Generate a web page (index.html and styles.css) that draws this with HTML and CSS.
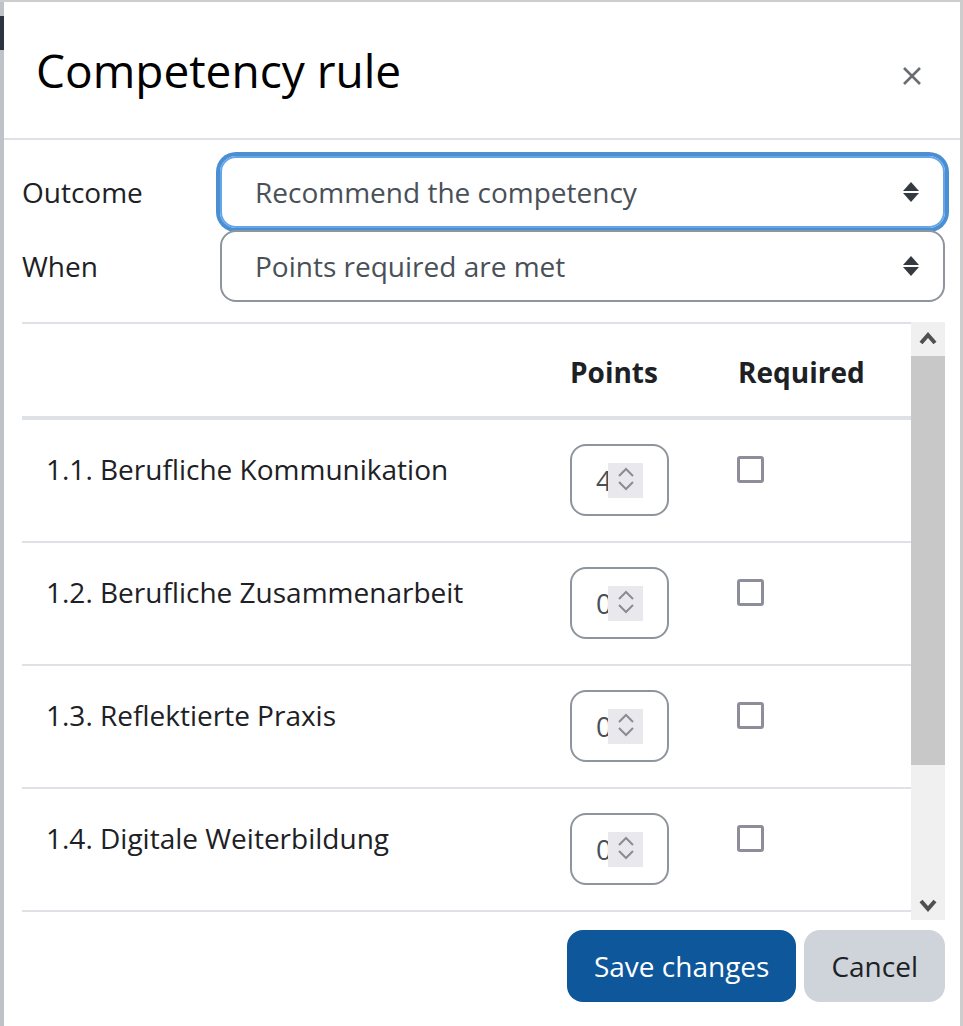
FILE: index.html
```html
<!DOCTYPE html>
<html lang="en">
<head>
    <meta charset="UTF-8">
    <meta name="viewport" content="width=device-width, initial-scale=1.0">
    <title>Competency rule</title>
    <link rel="stylesheet" href="styles.css">
</head>
<body>

    <div class="backdrop">
        <div class="backdrop-mark"></div>
    </div>

    <div class="modal">
        <div class="modal-header">
            <h5 class="modal-title">Competency rule</h5>
            <button class="close" aria-label="Close">
                <svg width="18" height="18" viewBox="0 0 18 18">
                    <path d="M1 1 L17 17 M17 1 L1 17" stroke="#6a6e73" stroke-width="2.6" fill="none"/>
                </svg>
            </button>
        </div>

        <div class="modal-body">
            <div class="form-row">
                <label class="form-label">Outcome</label>
                <div class="custom-select focused">
                    <span>Recommend the competency</span>
                    <svg width="16" height="20" viewBox="0 0 16 20">
                        <polygon points="0,9 8,0 16,9" fill="#343a40"/>
                        <polygon points="0,11 16,11 8,20" fill="#343a40"/>
                    </svg>
                </div>
            </div>
            <div class="form-row">
                <label class="form-label">When</label>
                <div class="custom-select">
                    <span>Points required are met</span>
                    <svg width="16" height="20" viewBox="0 0 16 20">
                        <polygon points="0,9 8,0 16,9" fill="#343a40"/>
                        <polygon points="0,11 16,11 8,20" fill="#343a40"/>
                    </svg>
                </div>
            </div>

            <div class="scroll-area">
                <div class="table-wrap">
                    <table class="rule-table">
                        <colgroup>
                            <col class="col-name">
                            <col class="col-points">
                            <col class="col-required">
                        </colgroup>
                        <thead>
                            <tr>
                                <th></th>
                                <th>Points</th>
                                <th>Required</th>
                            </tr>
                        </thead>
                        <tbody>
                            <tr>
                                <td class="name">1.1. Berufliche Kommunikation</td>
                                <td><div class="num-input"><span class="num-val">4</span><span class="spin"><svg width="35" height="35" viewBox="0 0 35 35"><polyline points="11,13 18,6 25,13" fill="none" stroke="#8b8b95" stroke-width="2"/><polyline points="11,19 18,26 25,19" fill="none" stroke="#8b8b95" stroke-width="2"/></svg></span></div></td>
                                <td><span class="checkbox"></span></td>
                            </tr>
                            <tr>
                                <td class="name">1.2. Berufliche Zusammenarbeit</td>
                                <td><div class="num-input"><span class="num-val">0</span><span class="spin"><svg width="35" height="35" viewBox="0 0 35 35"><polyline points="11,13 18,6 25,13" fill="none" stroke="#8b8b95" stroke-width="2"/><polyline points="11,19 18,26 25,19" fill="none" stroke="#8b8b95" stroke-width="2"/></svg></span></div></td>
                                <td><span class="checkbox"></span></td>
                            </tr>
                            <tr>
                                <td class="name">1.3. Reflektierte Praxis</td>
                                <td><div class="num-input"><span class="num-val">0</span><span class="spin"><svg width="35" height="35" viewBox="0 0 35 35"><polyline points="11,13 18,6 25,13" fill="none" stroke="#8b8b95" stroke-width="2"/><polyline points="11,19 18,26 25,19" fill="none" stroke="#8b8b95" stroke-width="2"/></svg></span></div></td>
                                <td><span class="checkbox"></span></td>
                            </tr>
                            <tr>
                                <td class="name">1.4. Digitale Weiterbildung</td>
                                <td><div class="num-input"><span class="num-val">0</span><span class="spin"><svg width="35" height="35" viewBox="0 0 35 35"><polyline points="11,13 18,6 25,13" fill="none" stroke="#8b8b95" stroke-width="2"/><polyline points="11,19 18,26 25,19" fill="none" stroke="#8b8b95" stroke-width="2"/></svg></span></div></td>
                                <td><span class="checkbox"></span></td>
                            </tr>
                        </tbody>
                    </table>
                </div>

                <div class="scrollbar">
                    <div class="sb-btn">
                        <svg width="34" height="34" viewBox="0 0 34 34">
                            <polyline points="10,21 17,13 24,21" fill="none" stroke="#505050" stroke-width="4"/>
                        </svg>
                    </div>
                    <div class="sb-thumb"></div>
                    <div class="sb-track"></div>
                    <div class="sb-btn">
                        <svg width="34" height="34" viewBox="0 0 34 34">
                            <polyline points="10,15 17,23 24,15" fill="none" stroke="#505050" stroke-width="4"/>
                        </svg>
                    </div>
                </div>
            </div>
        </div>

        <div class="modal-footer">
            <button class="btn btn-primary">Save changes</button>
            <button class="btn btn-secondary">Cancel</button>
        </div>
    </div>

</body>
</html>
```

FILE: styles.css
```css
* {
    box-sizing: border-box;
}

html, body {
    margin: 0;
    height: 100%;
}

body {
    display: flex;
    padding-top: 2px;
    background-color: #cdcdcd;
    font-family: "Open Sans", "Noto Sans", sans-serif;
    color: #1d2125;
    overflow: hidden;
}

.backdrop {
    width: 4px;
    background-color: #bfc2c6;
}

.backdrop-mark {
    height: 34px;
    margin-top: 14px;
    background-color: #2b3440;
}

.modal {
    width: 956px;
    height: 1024px;
    background-color: #fff;
    display: flex;
    flex-direction: column;
}

/* header */
.modal-header {
    height: 138px;
    padding: 0 39px 0 32px;
    display: flex;
    align-items: center;
    justify-content: space-between;
    border-bottom: 2px solid #dee2e6;
}

.modal-title {
    margin: 0;
    font-size: 46px;
    font-weight: 400;
    line-height: 56px;
    color: #000;
}

.close {
    margin-top: 12px;
    padding: 0;
    border: none;
    background: none;
    display: flex;
}

/* body */
.modal-body {
    padding: 16px 15px 0 18px;
}

.form-row {
    display: flex;
    align-items: center;
}

.form-row + .form-row {
    margin-top: 2px;
}

.form-label {
    width: 198px;
    font-size: 28px;
}

.custom-select {
    flex: 1;
    height: 72px;
    padding: 0 24px 0 33px;
    border: 2px solid #8f959e;
    border-radius: 16px;
    display: flex;
    align-items: center;
    justify-content: space-between;
    font-size: 28px;
    color: #495057;
}

.custom-select.focused {
    border-color: #64a6ea;
    box-shadow: 0 0 0 4px #4b8fd2;
}

/* table with scrollbar */
.scroll-area {
    margin-top: 20px;
    height: 598px;
    display: flex;
}

.table-wrap {
    flex: 1;
    overflow: hidden;
}

.rule-table {
    width: 100%;
    border-collapse: separate;
    border-spacing: 0;
    table-layout: fixed;
}

.col-name { width: 524px; }
.col-points { width: 168px; }
.col-required { width: 197px; }

.rule-table th {
    padding: 26px 24px 21px;
    border-top: 2px solid #dee2e6;
    border-bottom: 4px solid #dee2e6;
    text-align: left;
    font-size: 28px;
    font-weight: 700;
    line-height: 45px;
    height: 96px;
}

.rule-table td {
    padding: 24px 24px 25px;
    border-bottom: 2px solid #dee2e6;
    vertical-align: top;
    font-size: 28px;
    line-height: 45px;
}

.rule-table td.name {
    padding-top: 27px;
    padding-bottom: 22px;
}

.num-input {
    width: 99px;
    height: 72px;
    padding-left: 24px;
    border: 2px solid #8f959e;
    border-radius: 16px;
    display: flex;
    align-items: center;
    color: #495057;
}

.num-val {
    width: 12px;
    overflow: hidden;
}

.spin {
    width: 35px;
    height: 35px;
    background-color: #e9e9ed;
    display: flex;
}

.checkbox {
    display: block;
    width: 27px;
    height: 27px;
    margin: 12px 0 0 -1px;
    border: 3px solid #8e8e9a;
    border-radius: 3px;
}

.scrollbar {
    width: 34px;
    display: flex;
    flex-direction: column;
}

.sb-btn {
    height: 34px;
    background-color: #f0f0f0;
    display: flex;
}

.sb-thumb {
    height: 409px;
    background-color: #c8c8c8;
}

.sb-track {
    flex: 1;
    background-color: #f0f0f0;
}

/* footer */
.modal-footer {
    display: flex;
    justify-content: flex-end;
    gap: 8px;
    padding: 10px 15px 0 0;
}

.btn {
    height: 72px;
    padding: 0 27px;
    border: none;
    border-radius: 16px;
    font-family: inherit;
    font-size: 28px;
    cursor: pointer;
}

.btn-primary {
    background-color: #0e579b;
    color: #fff;
}

.btn-secondary {
    background-color: #ced4da;
    color: #1d2125;
}
```
